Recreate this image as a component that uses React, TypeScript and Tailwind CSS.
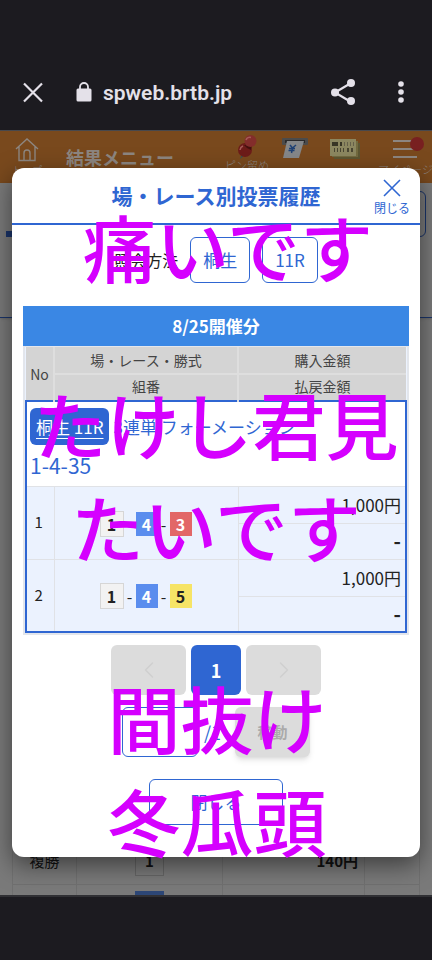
import { ChevronLeft, ChevronRight } from "lucide-react";

interface Bet {
  no: number;
  horses: number[];
  amount: string;
  payout: string;
}

const bets: Bet[] = [
  { no: 1, horses: [1, 4, 3], amount: "1,000円", payout: "-" },
  { no: 2, horses: [1, 4, 5], amount: "1,000円", payout: "-" },
];

const chipStyles: Record<number, string> = {
  1: "h-[26px] w-6 border border-[#d6d6d6] bg-[#f2f2f2] text-[#222]",
  3: "h-6 w-[22px] bg-[#e26767] text-white",
  4: "h-6 w-[22px] bg-[#5a8dee] text-white",
  5: "h-6 w-[22px] bg-[#f6e466] text-[#222]",
};

function BrowserBar() {
  return (
    <header className="flex h-[130px] items-end bg-[#1c1b20] pr-[25px] pb-[25px] pl-[22px] text-[#e4e1e9]">
      <button type="button" aria-label="Close tab" className="mb-0.5">
        <svg width="22" height="22" viewBox="0 0 22 22" fill="none" stroke="currentColor" strokeWidth="2.2">
          <path d="M2 2.5 20 20.5M20 2.5 2 20.5" />
        </svg>
      </button>
      <svg className="mb-0.5 ml-8" width="16" height="22" viewBox="0 0 16 22">
        <rect x="0.5" y="7.5" width="15" height="13" rx="1.5" fill="currentColor" />
        <path d="M4 8.5V6a4 4 0 0 1 8 0V8.5" fill="none" stroke="currentColor" strokeWidth="1.8" />
      </svg>
      <span className="ml-[11px] flex-1 font-[Roboto,sans-serif] text-[21px] leading-6 font-semibold">spweb.brtb.jp</span>
      <button type="button" aria-label="Share">
        <svg width="26" height="28" viewBox="0 0 26 28" fill="currentColor">
          <path d="M20 6 4 15.500 20 25" fill="none" stroke="currentColor" strokeWidth="2.2" />
          <circle cx="20" cy="6" r="4" />
          <circle cx="4" cy="15.500" r="4" />
          <circle cx="20" cy="24" r="4" />
        </svg>
      </button>
      <button type="button" aria-label="More" className="mb-0.5 ml-[38px]">
        <svg width="12" height="22" viewBox="0 0 12 22" fill="currentColor">
          <circle cx="6" cy="3" r="2.800" />
          <circle cx="6" cy="11" r="2.800" />
          <circle cx="6" cy="19" r="2.800" />
        </svg>
      </button>
    </header>
  );
}

function PinIcon() {
  return (
    <svg width="24" height="24" viewBox="0 0 24 24">
      <path d="m7 19-2 5 5-4z" fill="#355" />
      <circle cx="10" cy="15" r="7" fill="#6d1c19" />
      <path d="M9 10h8l-1 5-4-2z" fill="#45100e" />
      <circle cx="15.500" cy="6" r="6" fill="#832d2b" />
      <path d="M11 5a4 4 0 0 1 5-2.500" stroke="#a65a57" strokeWidth="1.500" fill="none" />
      <path d="M5 15a5 5 0 0 1 3-4" stroke="#a65a57" strokeWidth="1.500" fill="none" />
    </svg>
  );
}

function CashIcon() {
  return (
    <svg width="26" height="22" viewBox="0 0 26 22">
      <rect x="0" y="1" width="26" height="7" rx="1" fill="#4b4b4b" />
      <rect x="3" y="3" width="20" height="3" fill="#2a2a2c" />
      <path d="M5 4h17l-5 17H1z" fill="#858789" />
      <path d="m8 8 2.500 3L14 8M10.500 11l-1 5M7 11.500h6M6.500 13.500h6" stroke="#1f4174" strokeWidth="1.500" fill="none" />
    </svg>
  );
}

function TicketIcon() {
  return (
    <svg width="31" height="21" viewBox="0 0 31 21">
      <rect x="4" y="4" width="26" height="16" fill="#5d5632" />
      <rect x="2" y="2" width="26" height="16" fill="#736b40" />
      <rect x="0" y="0" width="26" height="17" fill="#8c8760" />
      <path d="M2 5h6M10 5h2" stroke="#383525" strokeWidth="4" />
      <path d="M14 5h1M17 5h1M20 5h1M23 5h1" stroke="#65604a" strokeWidth="4" />
      <path d="M4 11h1M7 11h1M10 11h1M13 11h1M17 11h2M21 11h2" stroke="#4a4632" strokeWidth="4" />
    </svg>
  );
}

function RacePage() {
  return (
    <div className="absolute inset-0 flex flex-col overflow-hidden bg-[#7a7a7a]" aria-hidden="true">
      <div className="flex h-[53px] shrink-0 items-start border-t border-[#48484c] bg-[#79491d] text-[#8d8680]">
        <div className="flex w-[54px] flex-col items-center pt-[7px] text-[10px] leading-4 font-light">
          <svg width="24" height="24" viewBox="0 0 24 24" fill="none" stroke="currentColor" strokeWidth="1.400">
            <path d="M1 11 12 1l11 10M4 8.500V22.500h16V8.500M9 22v-7q0-3 3-3t3 3v7" />
          </svg>
          トップ
        </div>
        <div className="ml-3 flex-1 pt-3.5 text-lg leading-6 font-bold">結果メニュー</div>
        <div className="flex w-12 flex-col items-center pt-1 text-[11px] leading-3 font-light">
          <PinIcon />
          ピン留め
        </div>
        <div className="flex w-12 justify-center pt-1.5">
          <CashIcon />
        </div>
        <div className="flex w-13 justify-center pt-2">
          <TicketIcon />
        </div>
        <div className="relative flex w-[61px] flex-col items-center pt-2 pl-2 text-[11px] leading-5 font-light whitespace-nowrap">
          <svg width="26" height="20" viewBox="0 0 26 20" stroke="currentColor" strokeWidth="1.800">
            <path d="M0 2h24M0 10h24M0 18h24" />
          </svg>
          <span className="absolute top-1.5 right-2 size-3.5 rounded-full bg-[#782020]" />
          マイページ
        </div>
      </div>
      <div className="flex h-[135px] shrink-0 justify-between border-b border-[#1a346a] pt-2 shadow">
        <div className="mt-10 ml-1.5 h-1.5 w-10 bg-[#1a346a]" />
        <div className="mr-1.5 h-[46px] w-16 rounded-md border border-[#1a346a]" />
      </div>
      <div className="flex-1" />
      <table className="mx-3 h-[57px] border-collapse text-[15px] text-[#111]">
        <tbody>
          <tr className="h-[46px]">
            <td className="w-16 border border-[#707070] p-0 text-center">複勝</td>
            <td className="w-[146px] border border-[#707070] p-0">
              <span className="mx-auto flex h-[30px] w-[29px] items-center justify-center border border-[#666] font-bold">1</span>
            </td>
            <td className="w-[142px] border border-[#707070] p-0 pr-1.5 text-right font-bold">140円</td>
            <td className="border border-[#707070]" />
          </tr>
          <tr className="h-[11px]">
            <td className="border border-b-0 border-[#707070]" />
            <td className="border border-b-0 border-[#707070] p-0 align-bottom">
              <span className="mx-auto block h-1 w-[29px] bg-[#2d4777]" />
            </td>
            <td className="border border-b-0 border-[#707070]" />
            <td className="border border-b-0 border-[#707070]" />
          </tr>
        </tbody>
      </table>
    </div>
  );
}

function BetTable() {
  return (
    <section className="mx-[11px] mt-[23px] bg-[#e3e6ec]">
      <h2 className="h-10 bg-[#3a87e4] text-center text-[17px] leading-10 font-bold text-white">8/25開催分</h2>
      <div className="px-0.5 pt-px pb-0.5">
        <table className="w-full table-fixed border-collapse bg-[#ebf2fe] text-[#222]">
          <colgroup>
            <col className="w-[28px]" />
            <col />
            <col className="w-[168px]" />
          </colgroup>
          <thead className="bg-[#d4d4d4] text-sm text-[#444]">
            <tr className="h-[27px]">
              <th rowSpan={2} className="border-r-2 border-[#dedede] p-0 font-normal">No</th>
              <th className="border-r-2 border-b-2 border-[#dedede] p-0 font-normal">場・レース・勝式</th>
              <th className="border-b-2 border-[#dedede] p-0 font-normal">購入金額</th>
            </tr>
            <tr className="h-[27px]">
              <th className="border-r-2 border-[#dedede] p-0 pb-1 font-normal">組番</th>
              <th className="p-0 pb-1 font-normal">払戻金額</th>
            </tr>
          </thead>
          <tbody className="border-2 border-[#2f66d2]">
            <tr className="h-[85px] bg-white text-[17px] text-[#2f66d2]">
              <td colSpan={3} className="p-0 pl-[3px] align-top">
                <div className="mt-1.5 flex items-center gap-1">
                  <a href="#race" className="flex h-[37px] items-center rounded-md bg-[#2f66d2] px-1.5 whitespace-pre text-white underline underline-offset-4">
                    桐生 11R
                  </a>
                  <span className="whitespace-nowrap">3連単 フォーメーション</span>
                </div>
                <div className="mt-1 text-[21px] leading-8">1-4-35</div>
              </td>
            </tr>
            {bets.map((bet) => [
              <tr key={`${bet.no}-amount`} className="h-[37px]">
                <td rowSpan={2} className="border border-[#e0e2e6] p-0 pr-[3px] text-center text-[15px]">{bet.no}</td>
                <td rowSpan={2} className="border border-[#e0e2e6] p-0 pt-0.5">
                  <div className="ml-[45px] flex items-center">
                    {bet.horses.map((horse, i) => (
                      <span key={horse} className="flex items-center text-base">
                        {i > 0 && <span className="w-3 text-center">-</span>}
                        <span className={`flex items-center justify-center font-bold ${chipStyles[horse]}`}>{horse}</span>
                      </span>
                    ))}
                  </div>
                </td>
                <td className="border border-[#e0e2e6] p-0 pr-1 text-right text-[17px]">{bet.amount}</td>
              </tr>,
              <tr key={`${bet.no}-payout`} className="h-[36px]">
                <td className="border border-[#e0e2e6] p-0 pr-1 text-right text-xl leading-6 font-bold">{bet.payout}</td>
              </tr>,
            ])}
          </tbody>
        </table>
      </div>
    </section>
  );
}

function HistoryDialog() {
  return (
    <div role="dialog" aria-label="場・レース別投票履歴" className="relative mx-[12px] my-[38px] rounded-xl bg-white pb-8 shadow-[0_8px_24px_rgba(0,0,0,0.5)]">
      <div className="relative flex h-[57px] items-center justify-center border-b-2 border-[#2f66d2] pb-0.5">
        <h1 className="text-[21px] leading-8 font-bold text-[#2f66d2]">場・レース別投票履歴</h1>
        <button type="button" className="absolute top-[11px] right-[10px] flex flex-col items-center gap-[3px] text-xs leading-4 text-[#2f66d2]">
          <svg width="18" height="18" viewBox="0 0 18 18" fill="none" stroke="currentColor" strokeWidth="1.600">
            <path d="m1 1 16 16M17 1 1 17" />
          </svg>
          閉じる
        </button>
      </div>
      <div className="mt-3 flex items-center justify-center gap-3 text-[17px] text-[#2f66d2]">
        <span className="text-base text-[#222]">照会方法</span>
        <button type="button" className="h-[46px] rounded-md border border-[#2f66d2] px-3">桐生</button>
        <button type="button" className="h-[46px] rounded-md border border-[#2f66d2] px-3">11R</button>
      </div>
      <BetTable />
      <nav className="mt-[10px] flex justify-center gap-[5px]">
        <button type="button" disabled aria-label="前へ" className="flex h-[50px] w-[75px] items-center justify-center rounded-md bg-[#dcdcdc] text-[#cfcfcf]">
          <ChevronLeft size={28} strokeWidth={1.2} />
        </button>
        <button type="button" className="size-[50px] rounded-md bg-[#2f66d2] text-lg font-bold text-white">1</button>
        <button type="button" disabled aria-label="次へ" className="flex h-[50px] w-[75px] items-center justify-center rounded-md bg-[#dcdcdc] text-[#cfcfcf]">
          <ChevronRight size={28} strokeWidth={1.2} />
        </button>
      </nav>
      <form className="mt-3 flex items-center justify-center text-lg text-[#2f66d2]">
        <input type="text" aria-label="ページ" className="h-[50px] w-[76px] rounded-md border border-[#2f66d2] px-2" />
        <span className="w-[37px] pl-1.5">/1</span>
        <button type="button" disabled className="h-[50px] w-[75px] rounded-md bg-[#dcdcdc] text-[15px] font-bold text-[#aaa] shadow-md">移動</button>
      </form>
      <button type="button" className="mx-auto mt-[22px] block h-[46px] w-[134px] rounded-md border border-[#2f66d2] text-[17px] text-[#2f66d2]">閉じる</button>
    </div>
  );
}

// Big captions laid over the whole screen
function Captions() {
  return (
    <div className="pointer-events-none absolute inset-0 text-center text-[73px] leading-[103px] font-medium whitespace-nowrap text-[#d500ff]">
      <p className="absolute inset-x-0 top-[194px] pl-6">痛いです</p>
      <p className="absolute inset-x-0 top-[371px]">たけし君見<br />たいです</p>
      <p className="absolute inset-x-0 top-[665px] pl-0.5">間抜け<br />冬瓜頭</p>
    </div>
  );
}

export default function App() {
  return (
    <div lang="ja" className="relative flex min-h-screen flex-col overflow-hidden bg-[#1c1b20] font-['Noto_Sans_CJK_JP',sans-serif]">
      <BrowserBar />
      <main className="relative">
        <RacePage />
        <HistoryDialog />
      </main>
      <footer className="min-h-[65px] flex-1 border-t-2 border-[#303034] bg-[#1c1b20]" />
      <Captions />
    </div>
  );
}
